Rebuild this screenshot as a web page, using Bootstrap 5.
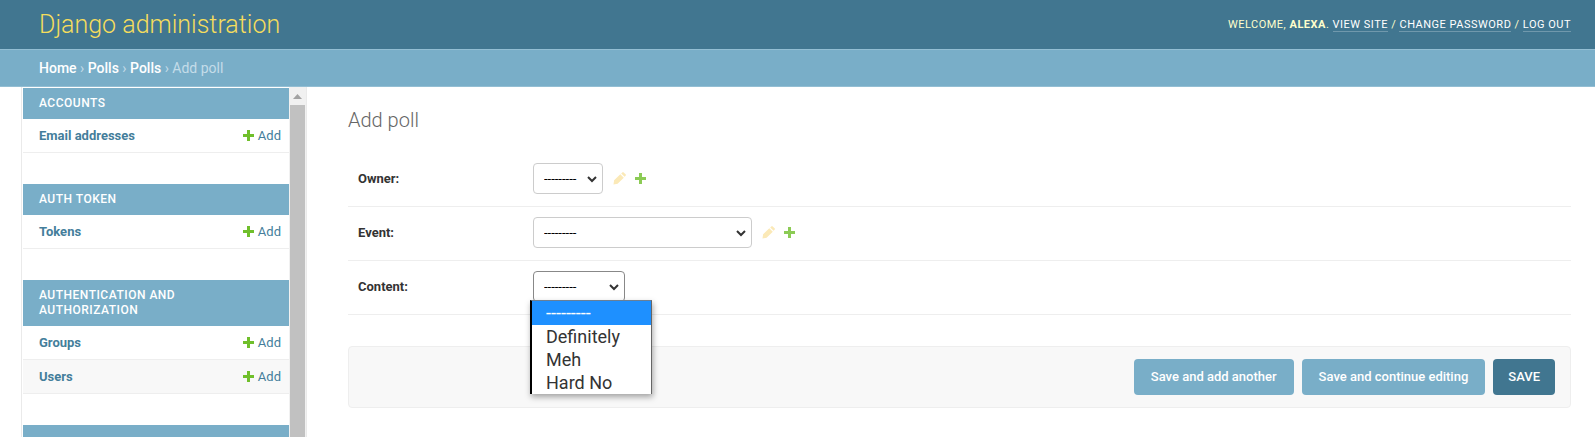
<!DOCTYPE html>
<html lang="en">
<head>
<meta charset="utf-8">
<meta name="viewport" content="width=device-width, initial-scale=1">
<title>Add poll | Django administration</title>
<link href="https://cdn.jsdelivr.net/npm/bootstrap@5.3.0/dist/css/bootstrap.min.css" rel="stylesheet">
<style>
  body { font: 13px/16px Roboto, "Liberation Sans", sans-serif; color: #333; background: #fff; }
  a { color: #447e9b; text-decoration: none; }

  /* Header */
  .site-header { background: #417690; padding: 9px 24px 9px 39px; color: #ffc; }
  .site-title { font-size: 25px; line-height: 31px; font-weight: 300; }
  .site-title a { color: #f5dd5d; }
  .user-tools { font-size: 11px; letter-spacing: .5px; text-transform: uppercase; font-weight: 400; }
  .user-tools a { color: #fff; border-bottom: 1px solid rgba(255,255,255,.25); }
  .user-tools strong { font-weight: 700; }
  .crumbs { background: #79aec8; border-top: 1px solid #93bed3; border-bottom: 1px solid #93bed3; padding: 9px 39px; font-size: 14px; line-height: 18px; color: #c4dce8; }
  .crumbs a { color: #fff; font-weight: 500; }

  /* Sidebar */
  .side-nav { width: 286px; margin-left: 21px; border-left: 1px solid #eaeaea; border-right: 1px solid #eaeaea; }
  .app-list { padding: 1px 0 0 1px; }
  .app-table { width: 100%; margin-bottom: 31px; caption-side: top; }
  .app-table caption { background: #79aec8; color: #fff; padding: 8px 16px; font-size: 12px; line-height: 15px; font-weight: 500; letter-spacing: .5px; text-transform: uppercase; caption-side: top; }
  .app-table caption a { color: #fff; display: block; max-width: 180px; }
  .app-table th, .app-table td { padding: 8px 8px 8px 16px; line-height: 17px; border-bottom: 1px solid #eee; }
  .app-table th { font-weight: 700; }
  .app-table td { text-align: right; width: 72px; padding-left: 0; }
  .app-table tr:nth-child(even) { background: #f8f8f8; }
  .add-icon { width: 11px; height: 11px; margin-right: 4px; vertical-align: -1px; }
  .scroll-track { width: 17px; background: #f1f1f1; }
  .scroll-up { height: 18px; }
  .scroll-thumb { width: 15px; background: #c1c1c1; }

  /* Form */
  .main-content { padding: 21px 24px 0 41px; }
  .main-content h1 { font-size: 20px; line-height: 24px; font-weight: 300; color: #666; margin: 0 0 21px; }
  .form-line { padding: 10px 10px 12px; border-bottom: 1px solid #eee; }
  .form-line label { width: 175px; font-weight: 700; }
  .form-line .form-select { height: 31px; padding: 6px 24px 6px 10px; border: 1px solid #ccc; border-radius: 4px; font-size: 13px; line-height: 17px; color: #000; background-position: right 5px center; background-size: 10px 8px;
    background-image: url("data:image/svg+xml,%3csvg xmlns='http://www.w3.org/2000/svg' viewBox='0 0 10 8'%3e%3cpath d='M1 2l4 4 4-4' fill='none' stroke='%23333' stroke-width='2'/%3e%3c/svg%3e"); }
  .form-line .sel-owner { width: 70px; }
  .form-line .sel-event { width: 219px; }
  .form-line .sel-content { width: 92px; border-color: #888; }
  .related-links { gap: 8px; margin-left: 10px; }
  .related { width: 13px; height: 13px; display: block; }
  .submit-bar { margin-top: 31px; padding: 12px 15px; gap: 8px; background: #f8f8f8; border: 1px solid #eee; border-radius: 4px; }
  .submit-bar .btn { padding: 10px 17px; font-size: 13px; line-height: 16px; font-weight: 500; border: 0; border-radius: 4px; color: #fff; background: #79aec8; }
  .submit-bar .btn-save { background: #417690; text-transform: uppercase; padding: 10px 15px; }

  /* Open option list */
  .option-list { top: 29px; left: -3px; width: 122px; z-index: 5; background: #fff; border-left: 2px solid #000; border-right: 1px solid #666; border-top: 1px solid #6b7f94; box-shadow: 1px 3px 6px rgba(0,0,0,.35); font-size: 18px; line-height: 23px; padding: 0; }
  .option-list li { padding: 0 14px; }
  .option-list .chosen { background: #1e90ff; color: #fff; padding-bottom: 1px; }
</style>
</head>
<body>
<svg class="d-none" aria-hidden="true">
  <symbol id="plus" viewBox="0 0 13 13"><path d="M5 1h3v4h4v3H8v4H5V8H1V5h4z"/></symbol>
  <symbol id="pencil" viewBox="0 0 13 13"><path d="M.5 12.500l.6-4.200L7.300 2.200l3.500 3.500-6.200 6.100zM8.200 1.400L9.300.4q.7-.6 1.400 0l1.900 1.900q.6.700 0 1.400l-1 1.100z"/></symbol>
</svg>
<div class="d-flex flex-column vh-100 overflow-hidden">
  <header class="site-header d-flex justify-content-between align-items-center">
    <div class="site-title"><a href="#">Django administration</a></div>
    <div class="user-tools">Welcome, <strong>alexa</strong>. <a href="#">View site</a> / <a href="#">Change password</a> / <a href="#">Log out</a></div>
  </header>
  <nav class="crumbs" aria-label="Breadcrumbs"><a href="#">Home</a> › <a href="#">Polls</a> › <a href="#">Polls</a> › Add poll</nav>

  <div class="d-flex flex-grow-1 overflow-hidden">
    <nav class="side-nav d-flex flex-shrink-0 overflow-hidden" aria-label="Sidebar">
      <div class="app-list flex-grow-1">
        <table class="app-table">
          <caption><a href="#">Accounts</a></caption>
          <tbody>
            <tr><th scope="row"><a href="#">Email addresses</a></th><td><a href="#"><svg class="add-icon" fill="#70bf2b" viewBox="1 1 11 11"><use href="#plus" width="13" height="13"/></svg>Add</a></td></tr>
          </tbody>
        </table>
        <table class="app-table">
          <caption><a href="#">Auth Token</a></caption>
          <tbody>
            <tr><th scope="row"><a href="#">Tokens</a></th><td><a href="#"><svg class="add-icon" fill="#70bf2b" viewBox="1 1 11 11"><use href="#plus" width="13" height="13"/></svg>Add</a></td></tr>
          </tbody>
        </table>
        <table class="app-table">
          <caption><a href="#">Authentication and Authorization</a></caption>
          <tbody>
            <tr><th scope="row"><a href="#">Groups</a></th><td><a href="#"><svg class="add-icon" fill="#70bf2b" viewBox="1 1 11 11"><use href="#plus" width="13" height="13"/></svg>Add</a></td></tr>
            <tr><th scope="row"><a href="#">Users</a></th><td><a href="#"><svg class="add-icon" fill="#70bf2b" viewBox="1 1 11 11"><use href="#plus" width="13" height="13"/></svg>Add</a></td></tr>
          </tbody>
        </table>
        <table class="app-table">
          <caption>&nbsp;</caption>
          <tbody></tbody>
        </table>
      </div>
      <div class="scroll-track d-flex flex-column align-items-center flex-shrink-0" aria-hidden="true">
        <div class="scroll-up d-flex align-items-center"><svg class="d-block" width="9" height="5" viewBox="0 0 9 5"><path d="M0 5L4.500 0 9 5z" fill="#a3a3a3"/></svg></div>
        <div class="scroll-thumb flex-grow-1"></div>
      </div>
    </nav>

    <main class="main-content flex-grow-1">
      <h1>Add poll</h1>
      <form>
        <div class="form-line d-flex align-items-center">
          <label for="owner">Owner:</label>
          <select id="owner" class="form-select sel-owner"><option>---------</option></select>
          <div class="related-links d-flex">
            <a href="#" aria-label="Change owner"><svg class="related" fill="#fbe9b7"><use href="#pencil"/></svg></a>
            <a href="#" aria-label="Add owner"><svg class="related" fill="#8ccb55"><use href="#plus"/></svg></a>
          </div>
        </div>
        <div class="form-line d-flex align-items-center">
          <label for="event">Event:</label>
          <select id="event" class="form-select sel-event"><option>---------</option></select>
          <div class="related-links d-flex">
            <a href="#" aria-label="Change event"><svg class="related" fill="#fbe9b7"><use href="#pencil"/></svg></a>
            <a href="#" aria-label="Add event"><svg class="related" fill="#8ccb55"><use href="#plus"/></svg></a>
          </div>
        </div>
        <div class="form-line d-flex align-items-center">
          <label for="content">Content:</label>
          <div class="position-relative">
            <select id="content" class="form-select sel-content"><option>---------</option><option>Definitely</option><option>Meh</option><option>Hard No</option></select>
            <ul class="option-list list-unstyled position-absolute mb-0" role="listbox" aria-label="Content">
              <li class="chosen" role="option" aria-selected="true">---------</li>
              <li role="option">Definitely</li>
              <li role="option">Meh</li>
              <li role="option">Hard No</li>
            </ul>
          </div>
        </div>
        <div class="submit-bar d-flex justify-content-end">
          <button type="button" class="btn">Save and add another</button>
          <button type="button" class="btn">Save and continue editing</button>
          <button type="button" class="btn btn-save">Save</button>
        </div>
      </form>
    </main>
  </div>
</div>
<script src="https://cdn.jsdelivr.net/npm/bootstrap@5.3.0/dist/js/bootstrap.bundle.min.js"></script>
</body>
</html>
